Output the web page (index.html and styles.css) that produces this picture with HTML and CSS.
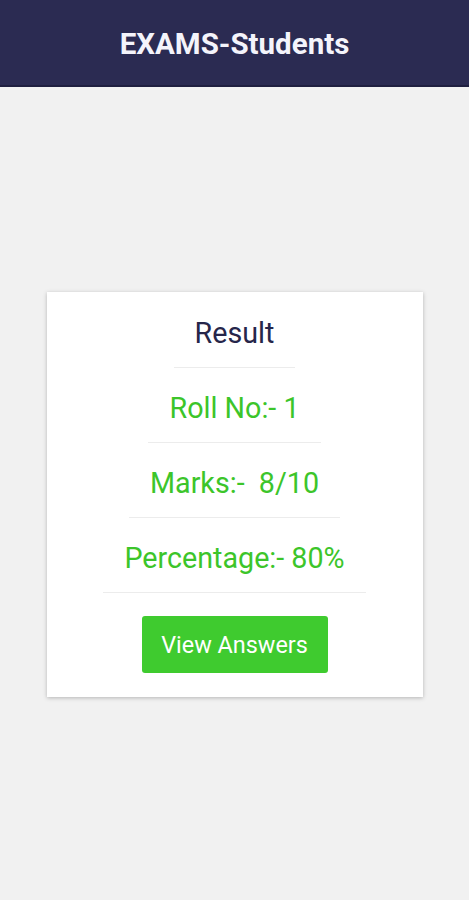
FILE: index.html
```html
<!DOCTYPE html>
<html>
<head>
<meta charset="utf-8">
<link rel="stylesheet" href="styles.css">
</head>
<body>
<header class="appbar"><h1 class="title">EXAMS-Students</h1></header>
<main class="content">
  <section class="card">
    <div class="row heading">Result</div>
    <div class="row green">Roll No:- 1</div>
    <div class="row green">Marks:-&nbsp; 8/10</div>
    <div class="row green">Percentage:- 80%</div>
    <button class="btn">View Answers</button>
  </section>
</main>
</body>
</html>
```
FILE: styles.css
```css
* { box-sizing: border-box; }
html, body { margin: 0; padding: 0; }
body {
  width: 469px;
  height: 900px;
  background: #f1f1f1;
  font-family: Roboto, "Noto Sans", sans-serif;
  display: flex;
  flex-direction: column;
}
.appbar {
  height: 87px;
  background: #2b2b52;
  display: flex;
  align-items: center;
  justify-content: center;
  padding-top: 3px;
  border-bottom: 2px solid #1f1f40;
}
.title {
  margin: 0;
  color: #f4f4fb;
  font-size: 29.5px;
  font-weight: 700;
}
.content {
  flex: 1;
  display: flex;
  justify-content: center;
  padding-top: 205px;
}
.card {
  width: 376px;
  height: 405px;
  background: #fff;
  box-shadow: 0 1px 4px rgba(0,0,0,0.25);
  display: flex;
  flex-direction: column;
  align-items: center;
  padding-top: 24px;
}
.row {
  font-size: 28.7px;
  line-height: 34px;
  padding: 0 21px 17px;
  border-bottom: 1px solid #ececec;
  margin-bottom: 23px;
}
.heading { color: #26264a; }
.green { color: #3cc52a; }
.btn {
  width: 186px;
  height: 57px;
  background: #3fcb2f;
  border: none;
  border-radius: 3px;
  color: #fff;
  font-family: Roboto, sans-serif;
  font-size: 23.4px;
}
```
